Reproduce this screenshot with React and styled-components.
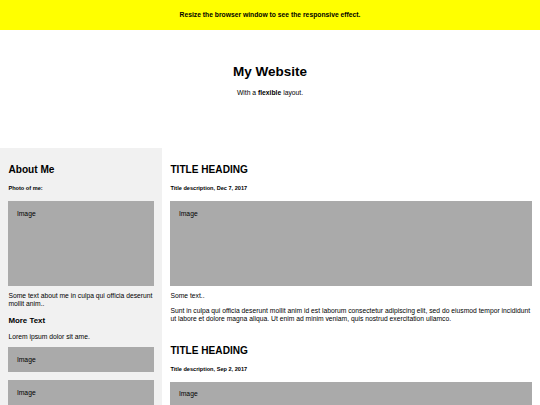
import React from "react";
import styled, { createGlobalStyle } from "styled-components";

const S = 540 / 1280;
const u = (n) => `${(n * S).toFixed(3)}px`;
// Arial / Liberation Sans "normal" line height
const lh = (size) => u(size * 1.149);

const Global = createGlobalStyle`
  *, *::before, *::after { box-sizing: border-box; }
  html, body { margin: 0; padding: 0; background: #ffffff; }
  body {
    font-family: "Liberation Sans", Arial, sans-serif;
    font-size: ${u(16)};
    line-height: ${lh(16)};
    color: #000000;
  }
`;

const Notice = styled.div`
  background: #ffff00;
  padding: ${u(5)};
`;

const NoticeText = styled.h4`
  margin: ${u(21.28)} 0;
  text-align: center;
  font-size: ${u(16)};
  line-height: ${lh(16)};
  font-weight: bold;
`;

const Header = styled.header`
  padding: ${u(60)} ${u(60)} ${u(105)};
  text-align: center;
`;

const SiteTitle = styled.h1`
  margin: ${u(21.44)} 0;
  font-size: ${u(32)};
  line-height: ${lh(32)};
  font-weight: bold;
`;

const Text = styled.p`
  margin: ${u(16)} 0;
  font-size: ${u(16)};
  line-height: ${lh(16)};
`;

const Row = styled.div`
  display: flex;
  flex-wrap: wrap;
`;

const Column = styled.div`
  flex: ${(p) => (p.$side ? "30%" : "70%")};
  background: ${(p) => (p.$side ? "#f1f1f1" : "#ffffff")};
  padding: ${u(20)};
`;

const Heading = styled.h2`
  margin: ${u(19.92)} 0;
  font-size: ${u(24)};
  line-height: ${lh(24)};
  font-weight: bold;
`;

const SubHeading = styled.h3`
  margin: ${u(18.72)} 0;
  font-size: ${u(18.72)};
  line-height: ${lh(18.72)};
  font-weight: bold;
`;

const Caption = styled.h5`
  margin: ${u(22.18)} 0;
  font-size: ${u(13.28)};
  line-height: ${lh(13.28)};
  font-weight: bold;
`;

const FakeImg = styled.div`
  width: 100%;
  height: ${(p) => u(p.$h)};
  padding: ${u(20)};
  background: #aaaaaa;
`;

const Gap = styled.div`
  height: ${lh(16)};
`;

const Footer = styled.footer`
  padding: ${u(20)};
  text-align: center;
  background: #dddddd;
`;

const FooterTitle = styled.h2`
  margin: ${u(19.92)} 0;
  font-size: ${u(24)};
  line-height: ${lh(24)};
  font-weight: bold;
`;

const lorem =
  "Sunt in culpa qui officia deserunt mollit anim id est laborum consectetur adipiscing elit, sed do eiusmod tempor incididunt ut labore et dolore magna aliqua. Ut enim ad minim veniam, quis nostrud exercitation ullamco.";

const posts = [
  { id: 1, date: "Dec 7, 2017" },
  { id: 2, date: "Sep 2, 2017" },
];

export default function App() {
  return (
    <>
      <Global />
      <Notice>
        <NoticeText>Resize the browser window to see the responsive effect.</NoticeText>
      </Notice>
      <Header>
        <SiteTitle>My Website</SiteTitle>
        <Text>
          With a <b>flexible</b> layout.
        </Text>
      </Header>
      <Row>
        <Column $side>
          <Heading>About Me</Heading>
          <Caption>Photo of me:</Caption>
          <FakeImg $h={200}>Image</FakeImg>
          <Text>Some text about me in culpa qui officia deserunt mollit anim..</Text>
          <SubHeading>More Text</SubHeading>
          <Text>Lorem ipsum dolor sit ame.</Text>
          <FakeImg $h={60}>Image</FakeImg>
          <Gap />
          <FakeImg $h={60}>Image</FakeImg>
          <Gap />
          <FakeImg $h={60}>Image</FakeImg>
        </Column>
        <Column>
          {posts.map((post, i) => (
            <React.Fragment key={post.id}>
              {i > 0 && <Gap />}
              <Heading>TITLE HEADING</Heading>
              <Caption>Title description, {post.date}</Caption>
              <FakeImg $h={200}>Image</FakeImg>
              <Text>Some text..</Text>
              <Text>{lorem}</Text>
            </React.Fragment>
          ))}
        </Column>
      </Row>
      <Footer>
        <FooterTitle>Footer</FooterTitle>
      </Footer>
    </>
  );
}
